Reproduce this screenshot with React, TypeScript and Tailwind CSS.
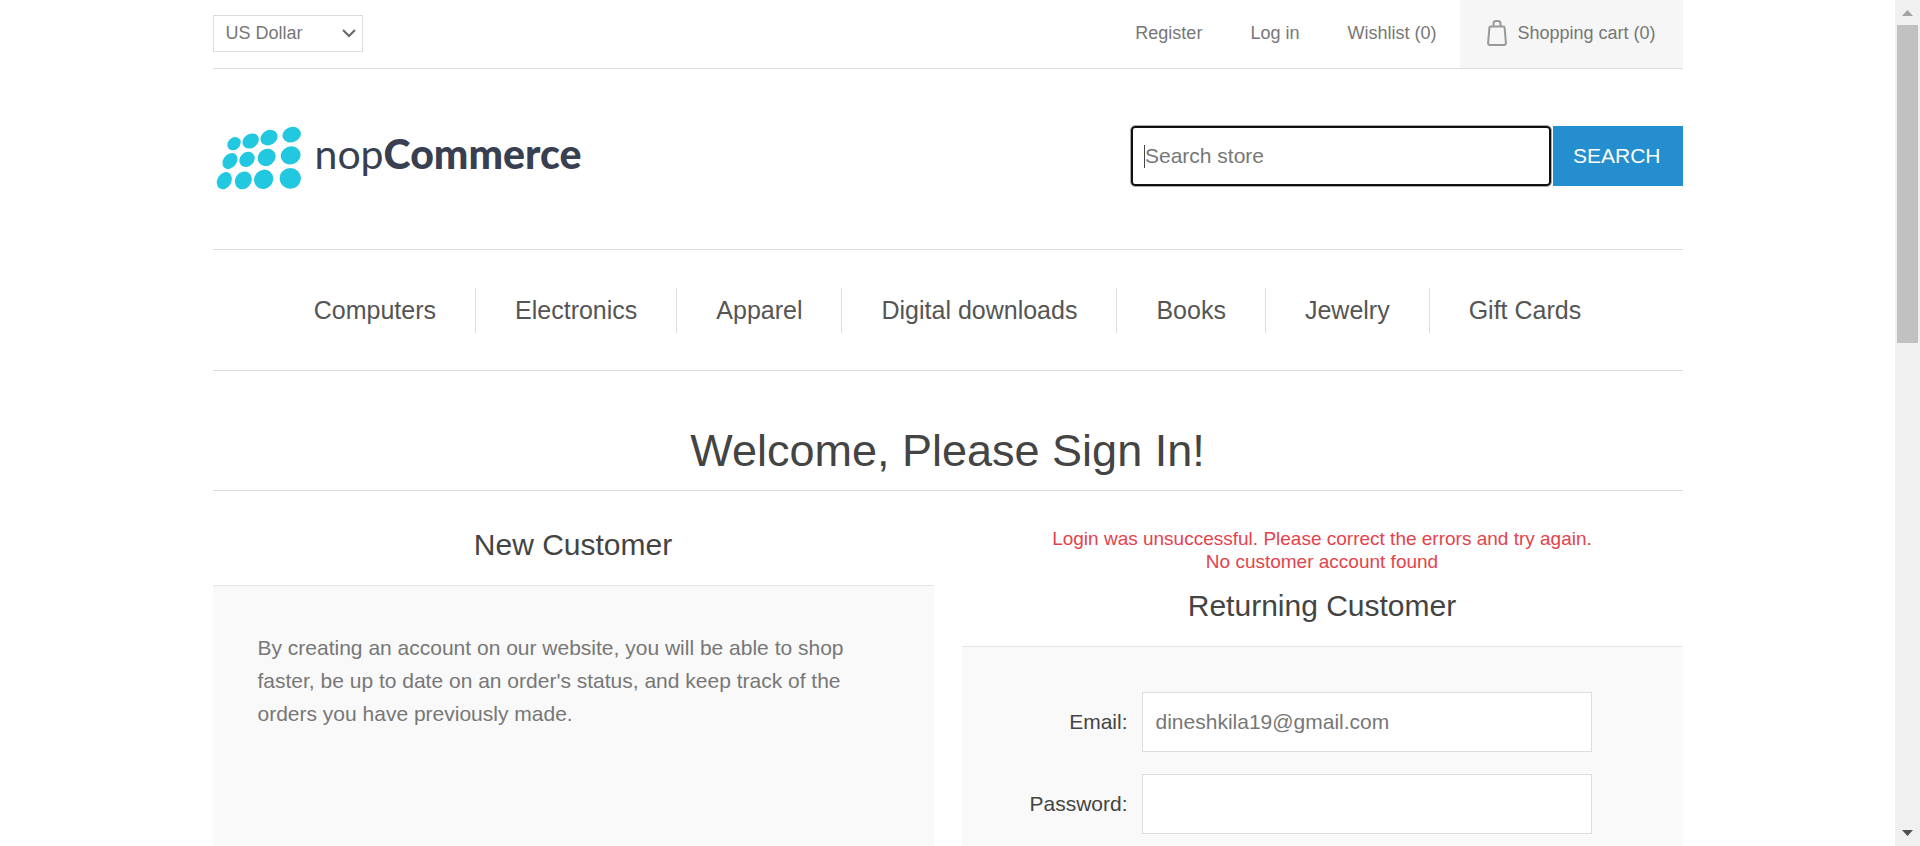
import React from "react";

const links = ["Register", "Log in", "Wishlist (0)"];
const categories = ["Computers", "Electronics", "Apparel", "Digital downloads", "Books", "Jewelry", "Gift Cards"];

// cx, cy, long radius, short radius, tilt
const dots = [
  [102, 431, 22, 18, -45], [152, 423, 26, 21, -35], [207, 413, 27, 22, -30], [275, 404, 28, 23, -20],
  [90, 483, 26, 20, -50], [141, 478, 25, 21, -45], [200, 472, 28, 25, -35], [272, 466, 30, 27, -20],
  [73, 542, 27, 21, -60], [130, 541, 28, 24, -55], [191, 538, 30, 28, -50], [271, 535, 32, 31, 0],
];

function Logo() {
  return (
    <a href="#" className="flex items-center text-[#373f51]">
      <svg viewBox="39 369 270 207" className="h-[69px] w-[90px]" aria-hidden="true">
        {dots.map(([x, y, a, b, t]) => (
          <ellipse key={`${x}-${y}`} cx={x} cy={y} rx={a} ry={b} transform={`rotate(${t} ${x} ${y})`} fill="#22c8e0" />
        ))}
      </svg>
      <span className="ml-3 pb-2 font-[Lato,sans-serif] text-[41px] leading-none">
        nop<span className="font-black">Commerce</span>
      </span>
    </a>
  );
}

function BagIcon() {
  return (
    <svg viewBox="0 0 20 26" className="h-[26px] w-5" fill="none" stroke="#999" strokeWidth="2" aria-hidden="true">
      <path d="M3.700 6.500h12.600q1.200 0 1.300 1.200l1.300 15.300q0 2-2 2H3.100q-2 0-2-2L2.400 7.700q.1-1.200 1.300-1.200z" />
      <path d="M6.500 6.500V3.500q0-2.500 2.500-2.500h2q2.500 0 2.500 2.500v3" />
    </svg>
  );
}

function Field({ id, label, type, value }: { id: string; label: string; type: string; value: string }) {
  return (
    <div className="flex items-center">
      <label htmlFor={id} className="w-[150px] pr-[14px] text-right text-[#444]">{label}</label>
      <input id={id} type={type} defaultValue={value} className="h-[60px] w-[450px] border border-[#ddd] bg-white px-[13px] text-[#777] outline-none" />
    </div>
  );
}

function ScrollBar() {
  return (
    <div className="flex w-[25px] shrink-0 flex-col bg-[#f0f0f0]" aria-hidden="true">
      <svg viewBox="0 0 25 25" className="h-[25px] w-[25px]"><path d="M7 16h11l-5.500-6z" fill="#a3a3a3" /></svg>
      <div className="flex-1"><div className="mx-[2px] h-2/5 bg-[#c1c1c1]" /></div>
      <svg viewBox="0 0 25 25" className="h-[25px] w-[25px]"><path d="M7 9h11l-5.500 6z" fill="#505050" /></svg>
    </div>
  );
}

export default function App() {
  return (
    <div className="flex h-screen overflow-hidden bg-white font-['Liberation_Sans',Arial,sans-serif] text-[21px] text-[#777]">
      <div className="flex min-w-0 flex-1 justify-center overflow-hidden">
        <div className="flex w-full max-w-[1470px] flex-col">
          <div className="flex h-[69px] shrink-0 items-center justify-between border-b border-[#ddd] text-lg">
            <div className="relative pb-[2px]">
              <select aria-label="Currency" className="block h-[37px] w-[150px] appearance-none border border-[#ddd] bg-white px-3 outline-none">
                <option>US Dollar</option>
              </select>
              <svg viewBox="0 0 14 9" className="pointer-events-none absolute top-[14px] right-[7px] h-[9px] w-[14px]" fill="none" stroke="#666" strokeWidth="2" aria-hidden="true">
                <path d="M1 1l6 6 6-6" />
              </svg>
            </div>
            <nav className="flex h-full items-center" aria-label="Account">
              {links.map((l) => (
                <a key={l} href="#" className="px-6 pb-[2px]">{l}</a>
              ))}
              <a href="#" className="flex h-full items-center gap-[10px] bg-[#f6f6f6] pr-[27px] pb-[2px] pl-[27px]">
                <BagIcon />
                Shopping cart (0)
              </a>
            </nav>
          </div>

          <header className="flex h-[181px] shrink-0 items-center justify-between border-b border-[#ddd] pb-[6px]">
            <div className="pt-[2px]">
              <Logo />
            </div>
            <form className="flex gap-[2px]" onSubmit={(e) => e.preventDefault()}>
              <div className="relative">
                <input aria-label="Search store" placeholder="Search store" className="h-[60px] w-[420px] rounded-sm border-2 border-[#101010] px-3 outline outline-[#aaa] placeholder:text-[#777]" />
                <span className="absolute top-[19px] left-[13px] h-[23px] w-px bg-[#444]" />
              </div>
              <button type="submit" className="h-[60px] bg-[#248ece] pr-[22px] pl-5 text-white">SEARCH</button>
            </form>
          </header>

          <nav className="flex h-[121px] shrink-0 items-center justify-center border-b border-[#ddd] text-[25px] text-[#555]" aria-label="Categories">
            {categories.map((c) => (
              <a key={c} href="#" className="border-l border-[#ddd] px-[39px] leading-[45px] first:border-l-0">{c}</a>
            ))}
          </nav>

          <main className="flex flex-1 flex-col">
            <h1 className="h-[120px] shrink-0 border-b border-[#ddd] pt-[54px] text-center text-[45px] leading-[52px] text-[#444]">Welcome, Please Sign In!</h1>
            <div className="grid flex-1 grid-cols-2 gap-7 pt-9">
              <section className="flex flex-col">
                <h2 className="h-[58px] text-center text-3xl text-[#444]">New Customer</h2>
                <div className="flex-1 border-t border-[#e5e5e5] bg-[#f9f9f9] px-[45px] pt-[45px] leading-[33px]">
                  <p className="max-w-[600px]">
                    By creating an account on our website, you will be able to shop faster, be up to date on an order's status, and keep track of the orders you have previously made.
                  </p>
                </div>
              </section>
              <section className="flex flex-col">
                <div className="h-[61px] text-center text-[19px] leading-[23px] text-[#e4434b]" role="alert">
                  <p>Login was unsuccessful. Please correct the errors and try again.</p>
                  <p>No customer account found</p>
                </div>
                <h2 className="h-[58px] text-center text-3xl text-[#444]">Returning Customer</h2>
                <form className="flex flex-1 flex-col gap-[22px] border-t border-[#e5e5e5] bg-[#f9f9f9] px-[30px] py-[45px]">
                  <Field id="email" label="Email:" type="email" value="dineshkila19@gmail.com" />
                  <Field id="password" label="Password:" type="password" value="" />
                </form>
              </section>
            </div>
          </main>
        </div>
      </div>
      <ScrollBar />
    </div>
  );
}
